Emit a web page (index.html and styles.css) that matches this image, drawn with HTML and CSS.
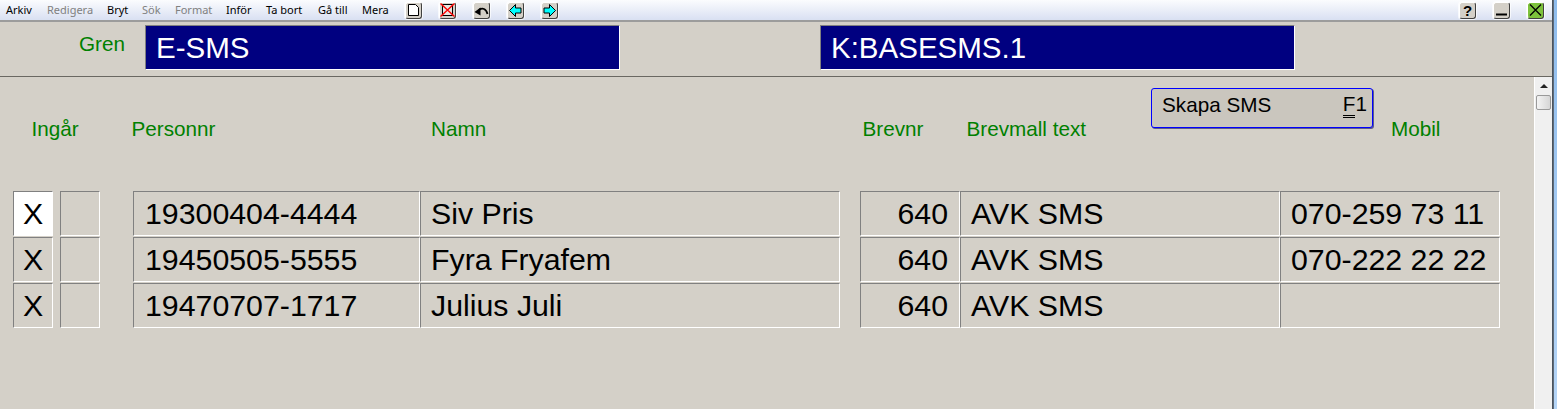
FILE: index.html
```html
<!DOCTYPE html>
<html lang="en">
<head>
    <meta charset="UTF-8">
    <title>E-SMS</title>
    <link rel="stylesheet" href="styles.css">
</head>
<body>
    <div class="window">
        <div class="menubar">
            <nav class="menu">
                <a class="m-arkiv" href="#">Arkiv</a>
                <a class="m-redigera off" href="#">Redigera</a>
                <a class="m-bryt" href="#">Bryt</a>
                <a class="m-sok off" href="#">Sök</a>
                <a class="m-format off" href="#">Format</a>
                <a class="m-infor" href="#">Inför</a>
                <a class="m-tabort" href="#">Ta bort</a>
                <a class="m-gatill" href="#">Gå till</a>
                <a class="m-mera" href="#">Mera</a>
            </nav>
            <div class="tools">
                <!-- New page -->
                <button class="tool"><svg viewBox="0 0 17 17"><path d="M3.500 2.500h7l3 3v8h-10z" fill="#fff" stroke="#000"/></svg></button>
                <!-- Delete page -->
                <button class="tool"><svg viewBox="0 0 17 17"><path d="M3.500 2.500h10v11h-10z" fill="#e8e6e0" stroke="#000"/><path d="M1.500 1.500l14 13M15.500 1.500l-14 13" stroke="#f00" stroke-width="1.400" fill="none"/></svg></button>
                <!-- Undo -->
                <button class="tool"><svg viewBox="0 0 17 17"><path d="M1.500 10l6-4.500v8z" fill="#000"/><path d="M6 8c3.500-2.500 7-1.500 8.500 4" stroke="#000" stroke-width="1.800" fill="none"/></svg></button>
                <!-- Back -->
                <button class="tool"><svg viewBox="0 0 17 17"><path d="M2.500 8.500l6-6v3.500h5.500v5h-5.500v3.500z" fill="#0ff" stroke="#000"/></svg></button>
                <!-- Forward -->
                <button class="tool"><svg viewBox="0 0 17 17"><path d="M14.500 8.500l-6-6v3.500h-5.500v5h5.500v3.500z" fill="#0ff" stroke="#000"/></svg></button>
            </div>
            <div class="win-buttons">
                <button class="tool help">?</button>
                <button class="tool"><svg viewBox="0 0 17 17"><path d="M3 12.500h11" stroke="#000" stroke-width="2" fill="none"/></svg></button>
                <button class="tool close"><svg viewBox="0 0 17 17"><path d="M3 2.500l11 11M14 2.500l-11 11" stroke="#000" stroke-width="1.300" fill="none"/></svg></button>
            </div>
        </div>

        <div class="topline">
            <span class="label gren">Gren</span>
            <div class="field field-left">E-SMS</div>
            <div class="field field-right">K:BASESMS.1</div>
        </div>

        <div class="body-wrap">
            <div class="content">
                <div class="heads">
                    <span class="label h-ingar">Ingår</span>
                    <span class="label h-personnr">Personnr</span>
                    <span class="label h-namn">Namn</span>
                    <span class="label h-brevnr">Brevnr</span>
                    <span class="label h-mall">Brevmall text</span>
                    <button class="skapa"><span>Skapa SMS</span><span><span class="hotkey">F</span>1</span></button>
                    <span class="label h-mobil">Mobil</span>
                </div>

                <div class="rows">
                    <div class="row">
                        <div class="cell c-x active">X</div>
                        <div class="cell c-y"></div>
                        <div class="cell c-pnr">19300404-4444</div>
                        <div class="cell c-name">Siv Pris</div>
                        <div class="cell c-nr">640</div>
                        <div class="cell c-text">AVK SMS</div>
                        <div class="cell c-mob">070-259 73 11</div>
                    </div>
                    <div class="row">
                        <div class="cell c-x">X</div>
                        <div class="cell c-y"></div>
                        <div class="cell c-pnr">19450505-5555</div>
                        <div class="cell c-name">Fyra Fryafem</div>
                        <div class="cell c-nr">640</div>
                        <div class="cell c-text">AVK SMS</div>
                        <div class="cell c-mob">070-222 22 22</div>
                    </div>
                    <div class="row">
                        <div class="cell c-x">X</div>
                        <div class="cell c-y"></div>
                        <div class="cell c-pnr">19470707-1717</div>
                        <div class="cell c-name">Julius Juli</div>
                        <div class="cell c-nr">640</div>
                        <div class="cell c-text">AVK SMS</div>
                        <div class="cell c-mob"></div>
                    </div>
                </div>
            </div>

            <div class="scrollbar">
                <div class="arrow"></div>
                <div class="thumb"></div>
            </div>
        </div>
    </div>
    <div class="edge"></div>
</body>
</html>
```

FILE: styles.css
```css
html, body {
    height: 100%;
}

body {
    font-family: "Liberation Sans", Arial, sans-serif;
    margin: 0;
    padding: 0;
    background: #d4d0c8;
    color: #000;
    display: flex;
    overflow: hidden;
}

.window {
    width: 1552px;
    display: flex;
    flex-direction: column;
}

.edge {
    flex: 1;
    border-left: 1px solid #4a5460;
    background: linear-gradient(180deg, #8fbdee, #b5d5f7);
    box-shadow: inset 1px 0 0 #5f6b78;
}

/* Menu bar */
.menubar {
    height: 20px;
    display: flex;
    align-items: center;
    background: linear-gradient(180deg, #fbfcfe, #d9e0f2);
    border-bottom: 2px solid #9c9c9c;
    flex-shrink: 0;
}

.menu {
    width: 405px;
    display: flex;
    font-family: "Noto Sans", sans-serif;
    font-size: 11px;
    padding-bottom: 1px;
}

.menu a {
    text-decoration: none;
    color: #000;
    display: block;
    white-space: nowrap;
}

.menu a.off {
    color: #808080;
}

.m-arkiv { margin-left: 6px; width: 41px; }
.m-redigera { width: 60px; }
.m-bryt { width: 35px; }
.m-sok { width: 33px; }
.m-format { width: 51px; }
.m-infor { width: 40px; }
.m-tabort { width: 52px; }
.m-gatill { width: 44px; }

.tools, .win-buttons {
    display: flex;
    gap: 17px;
}

.win-buttons {
    margin-left: auto;
    margin-right: 8px;
}

.tool {
    width: 17px;
    height: 17px;
    padding: 0;
    border: 1px solid #fff;
    border-right-color: #404040;
    border-bottom-color: #404040;
    border-radius: 3px;
    background: #d4d0c8;
    box-shadow: 0 0 0 1px rgba(255, 255, 255, 0.7);
    box-sizing: border-box;
    display: flex;
    align-items: center;
    justify-content: center;
    margin-top: 1px;
}

.tool svg {
    width: 17px;
    height: 17px;
    flex-shrink: 0;
}

.help {
    font-family: "Liberation Sans", sans-serif;
    font-weight: bold;
    font-size: 15px;
    line-height: 15px;
}

.close {
    background: #7dc23c;
}

/* Gren row */
.topline {
    height: 55px;
    display: flex;
    align-items: flex-start;
    padding-top: 3px;
    border-bottom: 1px solid #6a6862;
    flex-shrink: 0;
    box-sizing: border-box;
}

.label {
    color: #008000;
    font-size: 20.700px;
    white-space: nowrap;
}

.gren {
    width: 66px;
    margin-left: 79px;
    margin-top: 7px;
}

.field {
    width: 475px;
    height: 45px;
    box-sizing: border-box;
    background: #000080;
    color: #fff;
    font-size: 29.500px;
    line-height: 44px;
    padding-left: 10px;
    border: 1px solid #fff;
    border-top-color: #808080;
    border-left-color: #808080;
}

.field-right {
    margin-left: 200px;
}

/* Table area */
.body-wrap {
    flex: 1;
    display: flex;
    min-height: 0;
}

.content {
    flex: 1;
}

.heads {
    height: 114px;
    display: flex;
    align-items: flex-start;
    box-sizing: border-box;
    padding-left: 31.500px;
}

.heads .label {
    margin-top: 40px;
}

.h-ingar { width: 100px; }
.h-personnr { width: 299.500px; }
.h-namn { width: 431.500px; }
.h-brevnr { width: 104px; }
.h-mall { width: 184.500px; }
.h-mobil { margin-left: 18px; }

.skapa {
    width: 222px;
    height: 40px;
    margin-top: 11px;
    padding: 0 5px 6px 10px;
    display: flex;
    justify-content: space-between;
    align-items: center;
    background: #cac6be;
    border: 1px solid #0000ff;
    border-radius: 3px;
    box-shadow: 1px 1px 0 #5a5a8c;
    box-sizing: border-box;
    font-family: "Liberation Sans", sans-serif;
    font-size: 20.700px;
    color: #000;
}

.hotkey {
    border-bottom: 3px double #000;
    display: inline-block;
    line-height: 22px;
}

.rows {
    padding-left: 13px;
    display: flex;
    flex-direction: column;
    gap: 1px;
}

.row {
    display: flex;
}

.cell {
    height: 45px;
    line-height: 44px;
    box-sizing: border-box;
    border: 1px solid #fff;
    border-top-color: #808080;
    border-left-color: #808080;
    font-size: 30.300px;
    white-space: nowrap;
    padding-left: 11px;
}

.c-x { width: 40px; padding: 0; text-align: center; }
.c-y { width: 40px; margin-left: 7px; }
.c-pnr { width: 287px; margin-left: 33px; }
.c-name { width: 420px; padding-left: 10px; }
.c-nr { width: 100px; margin-left: 20px; padding: 0 11px 0 0; text-align: right; }
.c-text { width: 320px; padding-left: 10px; }
.c-mob { width: 220px; padding-left: 10px; }

.active {
    background: #fff;
}

/* Scrollbar */
.scrollbar {
    width: 18px;
    box-sizing: border-box;
    border-left: 1px solid #fff;
    background: #f0f0f0;
    display: flex;
    flex-direction: column;
    align-items: center;
    padding-top: 7px;
}

.arrow {
    width: 0;
    height: 0;
    border-left: 4px solid transparent;
    border-right: 4px solid transparent;
    border-bottom: 4px solid #222;
}

.thumb {
    width: 15px;
    height: 15px;
    margin-top: 7px;
    box-sizing: border-box;
    border: 1px solid #9a9a9a;
    border-radius: 2px;
    background: linear-gradient(90deg, #f4f4f4, #d6d6d6);
}
```
